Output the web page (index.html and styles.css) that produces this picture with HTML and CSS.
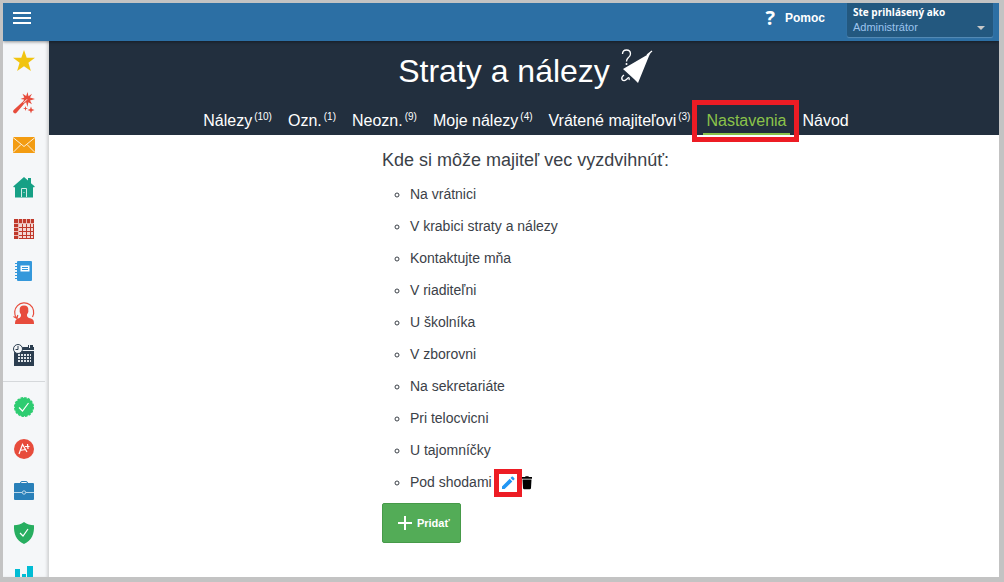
FILE: index.html
```html
<!DOCTYPE html>
<html lang="sk">

<head>
  <meta charset="UTF-8">
  <meta name="viewport" content="width=device-width, initial-scale=1.0">
  <title>Straty a nálezy</title>
  <link rel="stylesheet" href="styles.css">
</head>

<body>
  <header class="topbar">
    <button class="menu-toggle" aria-label="Menu">
      <svg width="20" height="16" viewBox="0 0 20 16" fill="none" stroke="#fff" stroke-width="2">
        <path d="M1 3h18M1 8h18M1 13h18" />
      </svg>
    </button>
    <a class="help" href="#"><span class="help-mark">?</span>Pomoc</a>
    <button class="user">
      <span class="user-label">Ste prihlásený ako</span>
      <span class="user-name">Administrátor</span>
      <span class="caret"></span>
    </button>
  </header>

  <div class="layout">
    <nav class="sidebar" aria-label="Moduly">
      <a href="#" aria-label="Obľúbené">
        <svg viewBox="0 0 22 22"><path fill="#f1c40f" d="M11 0l2.700 7.700H22l-6.600 5 2.500 8.300-6.900-4.800L4.100 21l2.500-8.300L0 7.700h8.300z" /></svg>
      </a>
      <a href="#" aria-label="Sprievodca">
        <svg viewBox="0 0 22 22">
          <path fill="#e74c3c" d="M14.500 0l1 4.200L19 1.800l-2 3.800 5 1.400-5 1.500 2 3.800-3.600-2-1 4.700-1.200-4.700-1.600 1L3.500 20.700a1.900 1.900 0 0 1-2.800-2.600L10.500 9 11 7.500 7.500 7l3.800-1.400L9.500 1.800l3.700 2.300z" />
          <path fill="none" stroke="#f5f7f9" d="M10.500 10.800l3.500-3.500" />
          <path fill="#e74c3c" d="M18 14.500l.9 2.600 2.600.9-2.600.9-.9 2.600-.9-2.600-2.600-.9 2.600-.9zM12.500 14l.6 1.900 1.900.6-1.900.6-.6 1.900-.6-1.900-1.900-.6 1.900-.6z" />
        </svg>
      </a>
      <a href="#" aria-label="Správy">
        <svg viewBox="0 0 22 22">
          <path fill="#f39c12" d="M0 3h22v16H0z" />
          <path fill="none" stroke="#fdf0da" d="M0 3.500l11 9 11-9M0 18.500l8-8M22 18.500l-8-8" />
        </svg>
      </a>
      <a href="#" aria-label="Domov">
        <svg viewBox="0 0 22 22">
          <path fill="#16a085" d="M11 1l4 3.500V2h3v5.200l3.800 3.300-.8 1-1-.5v10.500H2V11l-1 .5-.8-1z" />
          <path fill="none" stroke="#d5ece7" d="M8.500 21v-8.500h5V21M10.500 16.500h1" />
        </svg>
      </a>
      <a href="#" aria-label="Rozvrh">
        <svg viewBox="0 0 22 22">
          <path fill="#c0392b" d="M1 1h20v20H1z" />
          <path fill="#fff" fill-opacity=".8" d="M6 6h14v14H6z" />
          <path fill="none" stroke="#c0392b" d="M9.500 5v16M13.500 5v16M17.500 5v16M5 9.500h16M5 13.500h16M5 17.500h16" />
          <path fill="none" stroke="#e9b9b4" d="M5.500 1v20M9.500 1v4M13.500 1v4M17.500 1v4M1 5.500h20M1 9.500h4M1 13.500h4M1 17.500h4" />
        </svg>
      </a>
      <a href="#" aria-label="Triedna kniha">
        <svg viewBox="0 0 22 22">
          <rect x="4" y="1" width="15" height="20" rx="1" fill="#3498db" />
          <path fill="none" stroke="#3498db" d="M2 3.500h3M2 6.500h3M2 9.500h3M2 12.500h3M2 15.500h3M2 18.500h3" />
          <path fill="#fff" d="M7.500 5.500h9v6h-9z" />
          <path fill="none" stroke="#3498db" d="M9 7.500h6M9 9.500h6" />
        </svg>
      </a>
      <a href="#" aria-label="Žiaci">
        <svg viewBox="0 0 22 22">
          <path fill="#e74c3c" d="M11 3.500c3.200 0 4.600 2 4.300 4.700.4 1.800-.5 2.800-1.300 4.300 0 2.500.3 3 4.500 4.300 2 .8 2.500 2 2.500 5.200H2c0-3.200.5-4.400 2.500-5.200 3.200-1.300 3.500-1.800 3.500-4.300-.8-1.500-1.700-2.500-1.300-4.300-.3-2.700 1.100-4.700 4.300-4.700z" />
          <path fill="none" stroke="#e74c3c" stroke-width="1.200" d="M3.500 16A9.500 9.500 0 1 1 19.500 15M.500 14.500l3.500 2 .8-3.500" />
        </svg>
      </a>
      <a href="#" aria-label="Kalendár">
        <svg viewBox="0 0 22 22">
          <path fill="#2c3e50" d="M1 3h20v19H1zM15 1h5v3h-5z" />
          <path fill="none" stroke="#f5f7f9" d="M9 6.500h12M16.500 1v3" />
          <path fill="none" stroke="#dfe4e8" stroke-width="2" stroke-dasharray="2 1" d="M5 11h13M5 14h13M5 17h13" />
          <circle cx="5" cy="5" r="4.500" fill="#f5f7f9" stroke="#2c3e50" />
          <path fill="none" stroke="#2c3e50" d="M5 2v3.500H2.500" />
        </svg>
      </a>
      <hr class="divider">
      <a href="#" aria-label="Dochádzka">
        <svg viewBox="0 0 22 22">
          <circle cx="11" cy="11" r="9.300" fill="#2ecc71" />
          <circle cx="11" cy="11" r="9.300" fill="none" stroke="#2ecc71" stroke-width="1.500" stroke-dasharray="2.500 1.150" />
          <path fill="none" stroke="#fff" stroke-width="1.200" d="M6 11.500l3.500 3.500L15.500 7" />
        </svg>
      </a>
      <a href="#" aria-label="Známky">
        <svg viewBox="0 0 22 22">
          <circle cx="11" cy="11" r="10" fill="#e74c3c" />
          <path fill="none" stroke="#fff" stroke-width="1.200" d="M6 16l3.500-9.500L14 14M7 12.500l5.500-1M12 8.500h4.500M14.500 6l.5 5" />
        </svg>
      </a>
      <a href="#" aria-label="Agenda">
        <svg viewBox="0 0 22 22">
          <path fill="none" stroke="#2980b9" d="M7.500 4V3q0-1.500 1.500-1.500h4q1.500 0 1.500 1.500v1" />
          <rect x="1" y="3" width="20" height="17" rx="1" fill="#2980b9" />
          <path fill="none" stroke="#b9d7ea" d="M1 12.500h20" />
          <circle cx="11" cy="12.500" r="1.700" fill="#2980b9" stroke="#b9d7ea" />
        </svg>
      </a>
      <a href="#" aria-label="Bezpečnosť">
        <svg viewBox="0 0 22 22">
          <path fill="#27ae60" d="M11 0c3 2.300 6.500 3.300 10 3.300C21.400 12 19 18.500 11 22 3 18.500.6 12 1 3.300 4.500 3.300 8 2.300 11 0z" />
          <path fill="none" stroke="#fff" stroke-width="1.200" d="M7 11l3 3 5-7" />
        </svg>
      </a>
      <a href="#" aria-label="Štatistiky">
        <svg viewBox="0 0 22 22"><path fill="#00bcd4" d="M2 5h5v16H2zM9 10h4v11H9zM14 2h6v19h-6z" /></svg>
      </a>
    </nav>

    <main class="page">
      <div class="page-header">
        <h1 class="title">
          Straty a nálezy
          <svg width="34" height="36" viewBox="0 0 34 36">
            <path fill="#fff" d="M3 20L27 6l4-3-2 4-11 27-4-4z" />
            <path fill="none" stroke="#fff" stroke-width="1.300" d="M2.500 5q0-4 4-4t4 4q0 2-2.500 4-1.500 1.500-1.500 3.500M27 6l5-4M4 26q-3 2-2 4.500 2 2.500 5-.5t2 1" />
            <circle cx="6.500" cy="15" r="1" fill="#fff" />
          </svg>
        </h1>
        <nav class="tabs">
          <a href="#">Nálezy<sup>(10)</sup></a>
          <a href="#">Ozn.<sup>(1)</sup></a>
          <a href="#">Neozn.<sup>(9)</sup></a>
          <a href="#">Moje nálezy<sup>(4)</sup></a>
          <a href="#">Vrátené majiteľovi<sup>(3)</sup></a>
          <a class="active" href="#">Nastavenia<span class="marker"></span></a>
          <a href="#">Návod</a>
        </nav>
      </div>

      <section class="places">
        <h2>Kde si môže majiteľ vec vyzdvihnúť:</h2>
        <ul>
          <li>Na vrátnici</li>
          <li>V krabici straty a nálezy</li>
          <li>Kontaktujte mňa</li>
          <li>V riaditeľni</li>
          <li>U školníka</li>
          <li>V zborovni</li>
          <li>Na sekretariáte</li>
          <li>Pri telocvicni</li>
          <li>U tajomníčky</li>
          <li>
            Pod shodami
            <button class="icon-button edit" aria-label="Upraviť">
              <svg width="14" height="14" viewBox="0 0 14 14"><path fill="#2196f3" d="M1 10.500L8.700 2.800l2.600 2.600L3.600 13H1zM9.500 2l1.200-1.200q.6-.5 1.200 0l1.400 1.400q.5.600 0 1.200L12.100 4.600z" /></svg>
              <span class="marker"></span>
            </button>
            <button class="icon-button" aria-label="Zmazať">
              <svg width="12" height="14" viewBox="0 0 12 14"><path d="M1 1h3l.7-.8h2.600L8 1h3v1.700H1zM1.500 3.500h9L10 12q-.1 1.300-1.300 1.300H3.300Q2.100 13.300 2 12z" /></svg>
            </button>
          </li>
        </ul>
        <button class="add">
          <svg width="16" height="16" viewBox="0 0 16 16" fill="none" stroke="#fff" stroke-width="2"><path d="M8 1v14M1 8h14" /></svg>
          Pridať
        </button>
      </section>
    </main>
  </div>
</body>

</html>
```
FILE: styles.css
```css
* {
  box-sizing: border-box;
}

body {
  margin: 0;
  height: 100vh;
  display: flex;
  flex-direction: column;
  overflow: hidden;
  border: solid #c3c3c3;
  border-width: 3px 5px 5px 3px;
  background: #fff;
  color: #3b4148;
  font-family: "Liberation Sans", Arial, sans-serif;
  font-size: 14px;
}

button {
  margin: 0;
  padding: 0;
  border: 0;
  background: none;
  color: inherit;
  font: inherit;
  cursor: pointer;
}

a {
  color: inherit;
  text-decoration: none;
}

svg {
  display: block;
}

.topbar {
  flex: none;
  height: 38px;
  padding: 0 6px 4px 9px;
  display: flex;
  background: #2c6fa4;
  color: #fff;
  position: relative;
  z-index: 2;
  box-shadow: 0 1px 3px rgba(0, 0, 0, 0.4);
}

.menu-toggle,
.help {
  padding-bottom: 4px;
}

.help {
  margin-left: auto;
  margin-right: 22px;
  display: flex;
  align-items: center;
  gap: 10px;
  font-size: 12px;
  font-weight: bold;
}

.help-mark {
  font-family: "Open Sans", sans-serif;
  font-size: 20px;
  line-height: 20px;
}

.user {
  width: 146px;
  padding: 0 6px;
  position: relative;
  border-radius: 0 0 2px 2px;
  background: #23587f;
  box-shadow: 0 1px 1px rgba(255, 255, 255, 0.2);
  text-align: left;
}

.user-label,
.user-name {
  display: block;
  line-height: 15px;
}

.user-label {
  font-family: "Open Sans", sans-serif;
  font-size: 10px;
  font-weight: bold;
}

.user-name {
  color: #9cc4ee;
  font-size: 11px;
}

.caret {
  position: absolute;
  right: 8px;
  bottom: 7px;
  border: 4px solid transparent;
  border-top-color: #c8c8c8;
  border-bottom: 0;
}

.layout {
  flex: 1;
  min-height: 0;
  display: flex;
}

.sidebar {
  flex: none;
  width: 46px;
  padding-right: 4px;
  overflow: hidden;
  position: relative;
  background: #f5f7f9;
  box-shadow: inset -3px 0 3px -1px rgba(0, 0, 0, 0.15);
}

.sidebar a {
  height: 42px;
  padding-bottom: 2px;
  display: flex;
  align-items: center;
  justify-content: center;
}

.sidebar svg {
  width: 22px;
  height: 22px;
}

.divider {
  margin: 4px 0 5px;
  border: 0;
  border-top: 1px solid #d5d8db;
}

.page {
  flex: 1;
  min-width: 0;
}

.page-header {
  height: 94px;
  padding-left: 4px;
  display: flex;
  flex-direction: column;
  justify-content: space-between;
  background: #222f3e;
  color: #fff;
}

.title {
  margin: 0;
  padding-top: 8px;
  display: flex;
  justify-content: center;
  gap: 10px;
  font-size: 32px;
  font-weight: normal;
  line-height: 44px;
}

.tabs {
  display: flex;
  justify-content: center;
  gap: 10px;
  font-size: 16px;
}

.tabs a {
  height: 30px;
  padding: 0 3px;
  position: relative;
  border-bottom: 2px solid transparent;
  line-height: 32px;
  white-space: nowrap;
}

.tabs sup {
  margin-left: 2px;
  font-size: 10px;
  line-height: 0;
}

.tabs .active {
  border-bottom-color: #8bc34a;
  color: #8bc34a;
}

/* red highlight frames */
.marker {
  position: absolute;
  border: 5px solid #ed1c24;
  pointer-events: none;
}

.tabs .marker {
  inset: -5px -9px -9px -11px;
}

.places {
  width: fit-content;
  margin: 0 auto;
  padding: 14px 0 0 3px;
}

.places h2 {
  margin: 0 0 6px;
  font-size: 18px;
  font-weight: normal;
  line-height: 23px;
}

.places ul {
  margin: 0;
  padding-left: 28px;
  list-style: circle;
}

.places li {
  line-height: 32px;
}

.icon-button {
  margin-left: 3px;
  position: relative;
  display: inline-block;
  vertical-align: middle;
}

.edit {
  margin-left: 5px;
}

.edit .marker {
  inset: -7px;
}

.add {
  height: 40px;
  margin-top: 5px;
  padding: 0 10px 0 14px;
  display: flex;
  align-items: center;
  gap: 4px;
  border: 1px solid #469a49;
  border-radius: 2px;
  background: #53ac57;
  color: #fff;
  font-size: 11px;
  font-weight: bold;
}
```
